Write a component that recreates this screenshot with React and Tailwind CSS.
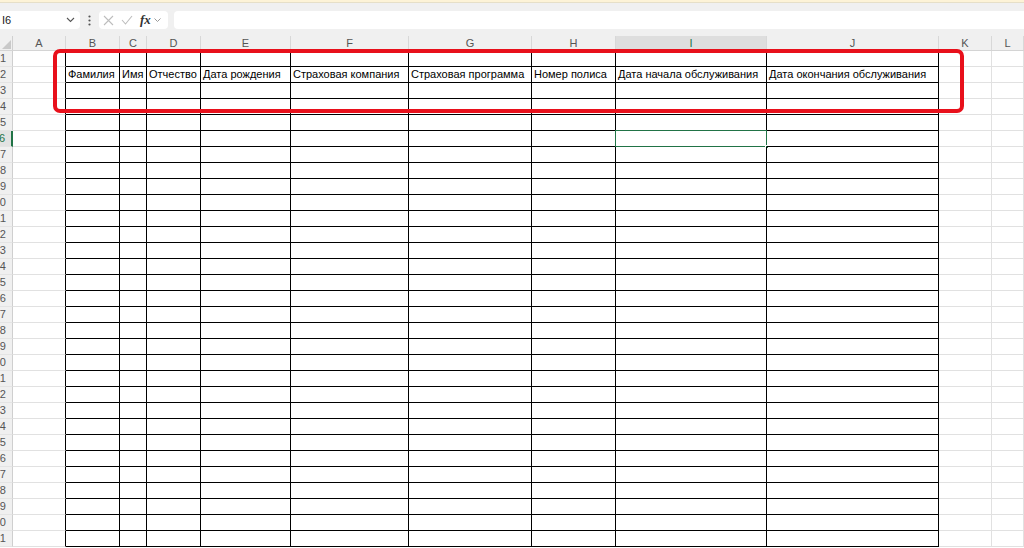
import React from 'react';

const font = { fontFamily: '"Liberation Sans", Arial, sans-serif' };

const cols = [
  { id: 'A', w: 53 },
  { id: 'B', w: 54, t: 'Фамилия' },
  { id: 'C', w: 27, t: 'Имя' },
  { id: 'D', w: 54, t: 'Отчество' },
  { id: 'E', w: 90, t: 'Дата рождения' },
  { id: 'F', w: 118, t: 'Страховая компания' },
  { id: 'G', w: 123, t: 'Страховая программа' },
  { id: 'H', w: 84, t: 'Номер полиса' },
  { id: 'I', w: 151, t: 'Дата начала обслуживания' },
  { id: 'J', w: 172, t: 'Дата окончания обслуживания' },
  { id: 'K', w: 53 },
  { id: 'L', w: 0 },
];

const gridCols = 'grid grid-cols-[13px_53px_54px_27px_54px_90px_118px_123px_84px_151px_172px_53px_1fr]';

function FormulaBar() {
  return (
    <div className="bg-[#f0f0f0]">
      <div className="h-[3px] bg-[#fdf3d7] border-b border-[#e6dfc8]" />
      <div className="flex items-center h-[33px] pt-[8px] pb-[7px]">
        <div className="w-[80px] h-[18px] bg-white rounded-r-[4px] flex items-center justify-between pl-[2px] pr-[5px]">
          <span className="text-[11px] text-[#222]">I6</span>
          <svg width="9" height="6" viewBox="0 0 9 6" fill="none" stroke="#555" strokeWidth="1.1"><path d="M1 1l3.5 3.5L8 1" /></svg>
        </div>
        <div className="w-[19px] flex justify-center">
          <svg width="3" height="11" viewBox="0 0 3 11" fill="#555"><circle cx="1.5" cy="1.5" r="1.1" /><circle cx="1.5" cy="5.5" r="1.1" /><circle cx="1.5" cy="9.5" r="1.1" /></svg>
        </div>
        <div className="w-[69px] h-[18px] bg-white rounded-[4px] flex items-center pl-[4px] gap-[7px]">
          <svg width="11" height="11" viewBox="0 0 11 11" stroke="#bdbdbd" strokeWidth="1.1"><path d="M1 1l9 9M10 1l-9 9" /></svg>
          <svg width="12" height="10" viewBox="0 0 12 10" fill="none" stroke="#bdbdbd" strokeWidth="1.1"><path d="M1 5l3.5 4L11 1" /></svg>
          <span className="italic text-[13px] font-semibold text-[#333] leading-none -mt-[2px]" style={{ fontFamily: '"Liberation Serif", serif' }}>fx</span>
          <svg width="7" height="5" viewBox="0 0 7 5" fill="none" stroke="#999" strokeWidth="1" className="-ml-[4px]"><path d="M0.5 0.5l3 3 3-3" /></svg>
        </div>
        <div className="flex-1 ml-[6px] h-[18px] bg-white rounded-l-[4px]" />
      </div>
    </div>
  );
}

function HeaderRow() {
  return (
    <div className={`${gridCols} h-[15px] bg-[#f0f0f0] border-b border-[#d4d4d4]`}>
      <div className="border-r border-[#d0d0d0] flex items-end justify-end pr-[1px] pb-[1px]">
        <svg width="9" height="9" viewBox="0 0 9 9"><path d="M9 0v9H0z" fill="#c9c9c9" /></svg>
      </div>
      {cols.map((c) => (
        <div key={c.id}
          className={`border-r border-[#d8d8d8] flex items-center justify-center text-[11px] leading-none ${
            c.id === 'I' ? 'bg-[#dedede] text-[#217346]' : 'text-[#555]'
          }`}>
          {c.id}
        </div>
      ))}
    </div>
  );
}

function Row({ n }) {
  const selRow = n === 6;
  return (
    <div className={`${gridCols} h-[16px]`}>
      <div className={`overflow-hidden flex items-center justify-end pr-[6px] text-[11px] leading-none whitespace-nowrap border-b border-[#e4e4e4] ${
        selRow ? 'bg-[#e2e2e2] text-[#217346] border-r-2 border-r-[#217346]' : 'bg-[#f0f0f0] text-[#555] border-r border-r-[#cfcfcf]'
      }`}>
        {n}
      </div>
      {cols.map((c, i) => {
        const inTable = i >= 1 && i <= 9;
        const edge = i === 0;
        const selected = selRow && c.id === 'I';
        return (
          <div key={c.id}
            className={`relative border-r border-b flex items-end pl-[2px] pb-[2px] text-[11px] leading-none text-black whitespace-nowrap ${
              inTable ? 'border-black' : edge ? 'border-r-black border-b-[#e1e1e1]' : 'border-[#e1e1e1]'
            }`}>
            {n === 2 && c.t}
            {selected && (
              <div className="absolute -left-[1px] -top-[1px] -right-[1px] -bottom-[1px] border-[1.5px] border-[#217346]">
                <div className="absolute -right-[3px] -bottom-[3px] w-[4px] h-[4px] bg-[#217346] border border-white" />
              </div>
            )}
          </div>
        );
      })}
    </div>
  );
}

export default function App() {
  const rows = Array.from({ length: 31 }, (_, i) => i + 1);
  return (
    <div className="relative w-[1024px] h-[548px] overflow-hidden bg-white" style={font}>
      <FormulaBar />
      <HeaderRow />
      <div>
        {rows.map((n) => <Row key={n} n={n} />)}
      </div>
      {/* red highlight around the table header */}
      <div className="absolute left-[53px] top-[49px] w-[911px] h-[64px] border-[4px] border-[#e8101b] rounded-[7px] pointer-events-none" />
    </div>
  );
}
